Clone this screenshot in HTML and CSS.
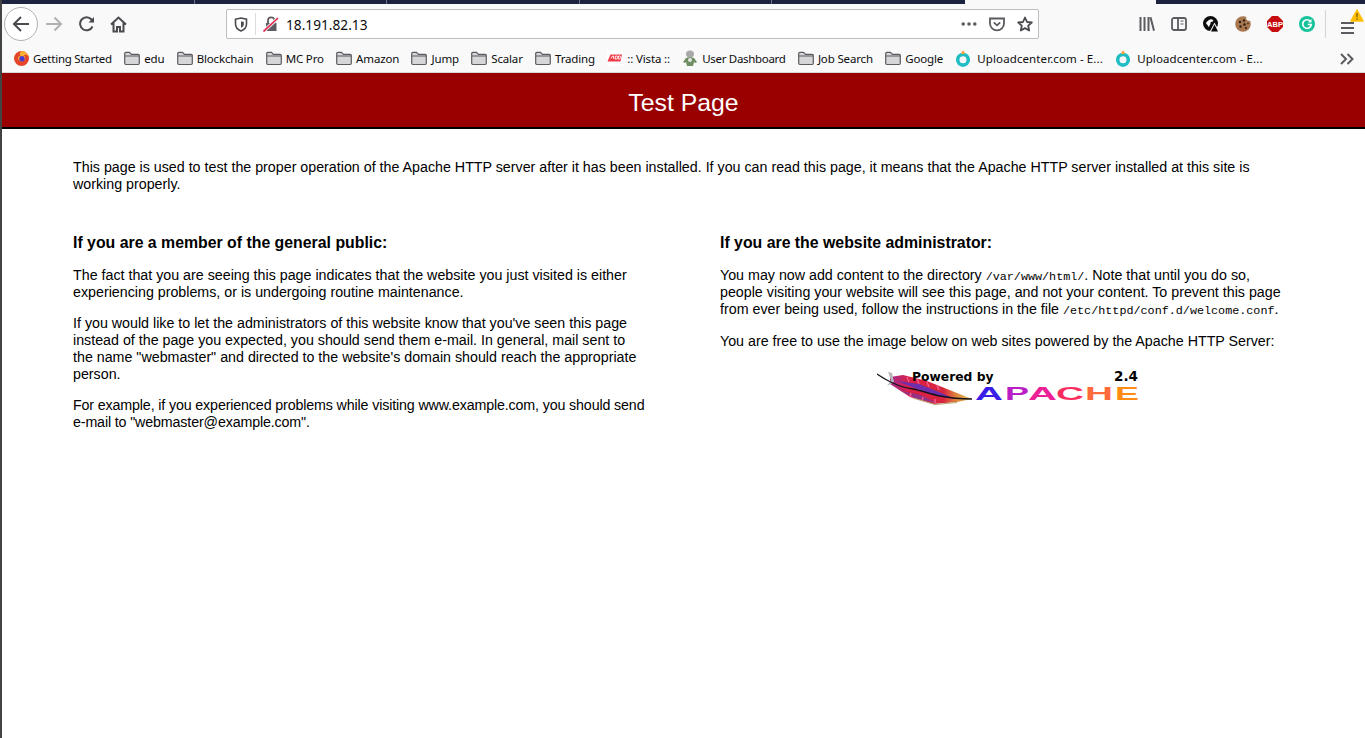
FILE: index.html
```html
<!DOCTYPE html>
<html lang="en">
<head>
    <meta charset="UTF-8">
    <meta name="viewport" content="width=device-width, initial-scale=1.0">
    <title>Test Page for the Apache HTTP Server</title>
    <link rel="stylesheet" href="styles.css">
</head>
<body>
    <!-- Folder icon used by the bookmarks -->
    <svg class="icon-defs" width="0" height="0">
        <symbol id="folder-icon" viewBox="0 0 16 16">
            <path d="M.7 3.500a1.200 1.200 0 0 1 1.200-1.200h3.600l2 2h6.600a1.200 1.200 0 0 1 1.200 1.200v7.800a1.200 1.200 0 0 1-1.200 1.200H1.900a1.200 1.200 0 0 1-1.200-1.200z" fill="#d6d6d8" stroke="#5b5b60" stroke-width="1.200"/>
            <path d="M1 6h14" stroke="#5b5b60" stroke-width="1"/>
        </symbol>
        <symbol id="upload-icon" viewBox="0 0 16 17">
            <circle cx="8" cy="9.800" r="5.300" fill="none" stroke="#22bcc4" stroke-width="3.600"/>
            <path d="M8 .5c1.500 1 1.800 2 1.500 3.500h-3C6.200 2.500 7 1.500 8 .5z" fill="#f6a13a"/>
        </symbol>
    </svg>

    <!-- Window edge behind the browser -->
    <span class="edge-mark edge-mark-tall"></span>
    <span class="edge-mark edge-mark-one"></span>
    <span class="edge-mark edge-mark-two"></span>

    <div class="browser-chrome">
        <!-- Tab strip, only its lower edge shows -->
        <div class="tab-strip">
            <div class="tab"></div>
            <div class="tab"></div>
            <div class="tab"></div>
            <div class="tab"></div>
            <div class="tab tab-last"></div>
            <div class="tab-gap"></div>
            <div class="tab-rest"></div>
        </div>

        <div class="toolbar">
            <div class="nav-buttons">
                <button class="back-btn" aria-label="Back">
                    <svg width="20" height="20" viewBox="0 0 20 20" fill="none" stroke="#4a4a4f" stroke-width="2">
                        <path d="M18 10H3M10 3l-7 7 7 7"/>
                    </svg>
                </button>
                <svg class="forward" width="18" height="18" viewBox="0 0 18 18" fill="none" stroke="#b1b1b3" stroke-width="2">
                    <path d="M1 9h15M9.500 2.500 16 9l-6.500 6.500"/>
                </svg>
                <svg class="reload" width="16" height="16" viewBox="0 0 16 16" fill="none" stroke="#4a4a4f" stroke-width="2">
                    <path d="M13.500 10.500A6.500 6.500 0 1 1 12.500 3.500L14.500 6"/>
                    <path d="M15 1v5.500H9.500" fill="#4a4a4f" stroke="none"/>
                </svg>
                <svg class="home" width="17" height="17" viewBox="0 0 17 17" fill="none" stroke="#4a4a4f" stroke-width="2">
                    <path d="M1 8.500 8.500 1.500 16 8.500M3.500 7v8.500h3.500v-4.500h3v4.500h3.500V7"/>
                </svg>
            </div>

            <div class="url-bar">
                <svg class="shield" width="14" height="15" viewBox="0 0 14 15" fill="none" stroke="#4a4a4f" stroke-width="1.600">
                    <path d="M1.500 2.200 7 1l5.500 1.200V7c0 3.500-2.500 5.800-5.500 7-3-1.200-5.500-3.500-5.500-7z"/>
                    <path d="M7 4.200 9.800 5V7.200c0 1.700-1.200 2.900-2.800 3.500z" fill="#4a4a4f" stroke="none"/>
                </svg>
                <span class="url-divider"></span>
                <svg class="lock" width="16" height="16" viewBox="0 0 16 16">
                    <path d="M3 7h10.500v8H3z" fill="#5b5b60"/>
                    <path d="M5 7V4.500a3.200 3.200 0 0 1 6.400 0V7" fill="none" stroke="#5b5b60" stroke-width="1.800"/>
                    <path d="M1 15 15 2" stroke="#f0f0f0" stroke-width="3.400"/>
                    <path d="M.5 15.500 15 2" stroke="#e22850" stroke-width="1.600"/>
                </svg>
                <span class="url-text">18.191.82.13</span>
                <div class="url-actions">
                    <svg width="16" height="16" viewBox="0 0 16 16" fill="#5b5b60">
                        <circle cx="2.200" cy="8" r="1.800"/><circle cx="8" cy="8" r="1.800"/><circle cx="13.800" cy="8" r="1.800"/>
                    </svg>
                    <svg width="16" height="16" viewBox="0 0 16 16" fill="none" stroke="#5b5b60" stroke-width="1.800">
                        <path d="M1 2.500h14V7.500a7 6.800 0 0 1-14 0z"/>
                        <path d="M4.800 6.300 8 9.300l3.200-3"/>
                    </svg>
                    <svg width="16" height="16" viewBox="0 0 16 16" fill="none" stroke="#4a4a4f" stroke-width="1.800" stroke-linejoin="round">
                        <path d="M8 1.500 10 6l4.800.5-3.600 3.200 1 4.800L8 12.100 3.800 14.500l1-4.800L1.200 6.500 6 6z"/>
                    </svg>
                </div>
            </div>

            <div class="toolbar-right">
                <svg width="16" height="16" viewBox="0 0 16 16" fill="none" stroke="#5b5b60" stroke-width="2">
                    <path d="M1.500 1v14M5.500 1v14M9.500 1v14M11.500 1.200l3.500 13.600"/>
                </svg>
                <svg width="16" height="16" viewBox="0 0 16 16" fill="none" stroke="#5b5b60" stroke-width="1.800">
                    <rect x="1" y="2" width="14" height="12" rx="2"/>
                    <path d="M7 2v12"/>
                    <path d="M9.500 5H12.500M9.500 8H12.500" stroke-width="1.200"/>
                </svg>
                <svg width="16" height="16" viewBox="0 0 16 16">
                    <circle cx="7.500" cy="7.500" r="7.500" fill="#0c0c0d"/>
                    <path d="M3 7c1-2 2-2 3-3s3-1 4 0-1 2-2 2 0 2-1 3-1 3-2 1-2-2-2-3z" fill="#f9f9fa"/>
                    <path d="M11.500 6.500 16.500 16H6.500z" fill="#f9f9fa"/>
                    <path d="M11.500 8.500 15 15.500H8z" fill="#0c0c0d"/>
                </svg>
                <svg width="16" height="16" viewBox="0 0 16 16">
                    <circle cx="8" cy="8" r="7.800" fill="#a9784f"/>
                    <circle cx="14" cy="2" r="2.800" fill="#f9f9fa"/>
                    <g fill="#2f1f14">
                        <circle cx="5" cy="6" r="1.200"/><circle cx="9" cy="4.500" r="1.200"/><circle cx="9.500" cy="8.500" r="1.300"/>
                        <circle cx="5.500" cy="10.500" r="1.200"/><circle cx="11" cy="12" r="1.100"/><circle cx="13" cy="7.500" r=".8"/>
                    </g>
                </svg>
                <svg width="16" height="16" viewBox="0 0 16 16">
                    <path d="M5 0h6l5 5v6l-5 5H5l-5-5V5z" fill="#c70d0d"/>
                    <text class="abp-text" x="8" y="11" text-anchor="middle">ABP</text>
                </svg>
                <svg width="16" height="16" viewBox="0 0 16 16">
                    <circle cx="8" cy="8" r="8" fill="#15c39a"/>
                    <path d="M11.500 5.500A4.300 4.300 0 1 0 12.300 8.500H8.800" fill="none" stroke="#fff" stroke-width="1.700"/>
                    <path d="M12.500 3v3.500H9z" fill="#fff"/>
                </svg>
                <span class="toolbar-divider"></span>
                <div class="menu-btn">
                    <svg width="13" height="13" viewBox="0 0 13 13" fill="#5b5b60">
                        <rect y="0" width="13" height="2"/><rect y="5" width="13" height="2"/><rect y="10" width="13" height="2"/>
                    </svg>
                    <svg class="menu-warning" width="14" height="13" viewBox="0 0 14 13">
                        <path d="M7 1 13 12H1z" fill="#ffbf00" stroke="#ffbf00" stroke-width="1.500" stroke-linejoin="round"/>
                        <path d="M7 4v4.200M7 9.300v1.400" stroke="#7a5c00" stroke-width="1.300"/>
                    </svg>
                </div>
            </div>
        </div>

        <div class="bookmarks">
            <a class="bookmark bookmark-first">
                <svg width="15" height="15" viewBox="0 0 15 15">
                    <circle cx="7.500" cy="7.500" r="7.500" fill="#e5462b"/>
                    <path d="M7.500 0A7.500 7.500 0 0 1 15 7.500C15 4 11 3 9.500 4.500 12 5 12 9 9 10c-3 1-5-1-5-3 0-1 1-2 2.500-2C5 3 6 1 7.500 0z" fill="#ffb02e"/>
                    <circle cx="8" cy="7.800" r="2.700" fill="#4a3ad0"/>
                </svg>
                Getting Started
            </a>
            <a class="bookmark"><svg class="folder-svg"><use href="#folder-icon"/></svg>edu</a>
            <a class="bookmark"><svg class="folder-svg"><use href="#folder-icon"/></svg>Blockchain</a>
            <a class="bookmark"><svg class="folder-svg"><use href="#folder-icon"/></svg>MC Pro</a>
            <a class="bookmark"><svg class="folder-svg"><use href="#folder-icon"/></svg>Amazon</a>
            <a class="bookmark"><svg class="folder-svg"><use href="#folder-icon"/></svg>Jump</a>
            <a class="bookmark"><svg class="folder-svg"><use href="#folder-icon"/></svg>Scalar</a>
            <a class="bookmark"><svg class="folder-svg"><use href="#folder-icon"/></svg>Trading</a>
            <a class="bookmark">
                <svg width="16" height="16" viewBox="0 0 16 16">
                    <rect width="16" height="16" fill="#fff"/>
                    <path d="M3.500 4.500h11.500l-1.500 7H.5z" fill="#ef3b46"/>
                    <path d="M4 8.500 5.500 6h1l.3 3M8 9l.5-3h1.500c1 0 1 3-.8 3zM11 9l.5-3h1.500c1 0 1 3-.8 3z" fill="none" stroke="#fff" stroke-width=".9"/>
                </svg>
                :: Vista ::
            </a>
            <a class="bookmark bookmark-tight">
                <svg width="16" height="17" viewBox="0 0 16 17">
                    <ellipse cx="8" cy="4" rx="4" ry="3.500" fill="#a9a9a9"/>
                    <path d="M4 8c2-1 6-1 8 0l3 4-2 1-1-1-1 4H5l-1-4-1 1-2-1z" fill="#6f8f63"/>
                    <circle cx="8" cy="10" r="2" fill="#e4e4e4"/>
                </svg>
                User Dashboard
            </a>
            <a class="bookmark"><svg class="folder-svg"><use href="#folder-icon"/></svg>Job Search</a>
            <a class="bookmark"><svg class="folder-svg"><use href="#folder-icon"/></svg>Google</a>
            <a class="bookmark upload"><svg class="upload-svg"><use href="#upload-icon"/></svg>Uploadcenter.com - E...</a>
            <a class="bookmark upload"><svg class="upload-svg"><use href="#upload-icon"/></svg>Uploadcenter.com - E...</a>
            <svg class="bookmarks-more" width="14" height="12" viewBox="0 0 14 12" fill="none" stroke="#5b5b60" stroke-width="2">
                <path d="M1 1l5 5-5 5M7.500 1l5 5-5 5"/>
            </svg>
        </div>
    </div>

    <div class="page-header">
        <h1>Test Page</h1>
    </div>

    <div class="content">
        <p class="intro">This page is used to test the proper operation of the Apache HTTP server after it has been installed. If you can read this page, it means that the Apache HTTP server installed at this site is working properly.</p>

        <div class="columns">
            <div class="column">
                <h2>If you are a member of the general public:</h2>
                <p>The fact that you are seeing this page indicates that the website you just visited is either experiencing problems, or is undergoing routine maintenance.</p>
                <p>If you would like to let the administrators of this website know that you've seen this page instead of the page you expected, you should send them e-mail. In general, mail sent to the name "webmaster" and directed to the website's domain should reach the appropriate person.</p>
                <p class="tight">For example, if you experienced problems while visiting www.example.com, you should send e-mail to "webmaster@example.com".</p>
            </div>
            <div class="column">
                <h2>If you are the website administrator:</h2>
                <p class="admin-note">You may now add content to the directory <code>/var/www/html/</code>. Note that until you do so, people visiting your website will see this page, and not your content. To prevent this page from ever being used, follow the instructions in the file <code>/etc/httpd/conf.d/welcome.conf</code>.</p>
                <p>You are free to use the image below on web sites powered by the Apache HTTP Server:</p>
                <div class="logo-wrap">
                    <svg width="264" height="36" viewBox="0 0 264 36">
                        <defs>
                            <linearGradient id="feather" x1="0" y1="0" x2="1" y2="0">
                                <stop offset="0" stop-color="#a52a8c"/>
                                <stop offset=".25" stop-color="#dc1f45"/>
                                <stop offset=".65" stop-color="#d8253f"/>
                                <stop offset=".8" stop-color="#e0803a"/>
                                <stop offset="1" stop-color="#dcc860"/>
                            </linearGradient>
                        </defs>
                        <!-- Feather -->
                        <path d="M13 8 26 6 50 12 70 20 95 30 80 33 56 35 33 28 13 15z" fill="url(#feather)"/>
                        <path d="M20 12 40 20 60 27 78 30 62 23 42 15z" fill="#6d2fae"/>
                        <path d="M24 22 40 30 60 34 44 26z" fill="#7a3a9e" opacity=".75"/>
                        <path d="M30 8 32 13M40 10 42 15M50 13 52 18M60 16 62 21M34 24 33 28M46 28 45 32M58 30 58 34" stroke="#f05a8c" stroke-width="1.500"/>
                        <path d="M36 29 58 35.500 80 33.500" fill="none" stroke="#b9a77c" stroke-width="1.200"/>
                        <path d="M11 3 14 11 10 17 17 13 15 4z" fill="#b4b8bc"/>
                        <path d="M0 5C6 9 11 12 16 14c6 3 13 5 20 6 9 2 18 5 27 7 10 2 22 3 32 3" fill="none" stroke="#16121a" stroke-width="1.300"/>
                        <!-- Wordmark -->
                        <text class="logo-powered" x="35" y="12">Powered by</text>
                        <text class="logo-version" x="237" y="12">2.4</text>
                        <text class="logo-apache" x="98" y="31" textLength="28" lengthAdjust="spacingAndGlyphs" fill="#3a1ee8">A</text>
                        <text class="logo-apache" x="128" y="31" textLength="24" lengthAdjust="spacingAndGlyphs" fill="#b81fc4">P</text>
                        <text class="logo-apache" x="151" y="31" textLength="29" lengthAdjust="spacingAndGlyphs" fill="#ec1f96">A</text>
                        <text class="logo-apache" x="179" y="31" textLength="28" lengthAdjust="spacingAndGlyphs" fill="#fb2d5f">C</text>
                        <text class="logo-apache" x="208" y="31" textLength="28" lengthAdjust="spacingAndGlyphs" fill="#ff6a3c">H</text>
                        <text class="logo-apache" x="238" y="31" textLength="24" lengthAdjust="spacingAndGlyphs" fill="#ff8c12">E</text>
                    </svg>
                </div>
            </div>
        </div>
    </div>
</body>
</html>
```

FILE: styles.css
```css
:root {
    --chrome-bg: #f9f9fa;
    --tab-navy: #1c2340;
    --header-red: #990000;
    --edge: #434343;
}

* {
    box-sizing: border-box;
}

html, body {
    margin: 0;
    padding: 0;
}

body {
    position: relative;
    background: #fff;
    color: #000;
    font-family: "Liberation Sans", Arial, sans-serif;
    height: 738px;
    overflow: hidden;
    border-left: 2px solid var(--edge);
}

.icon-defs {
    position: absolute;
}

.edge-mark {
    position: absolute;
    left: -2px;
    width: 2px;
    height: 3px;
    background: #a0a0a0;
}

.edge-mark-tall {
    top: 282px;
    height: 46px;
    background: #777;
}

.edge-mark-one {
    top: 547px;
}

.edge-mark-two {
    top: 558px;
}

/* Browser chrome */
.browser-chrome {
    background: var(--chrome-bg);
    height: 73px;
    font-family: "Noto Sans", sans-serif;
    color: #0c0c0d;
}

.tab-strip {
    display: flex;
    height: 4px;
}

.tab {
    width: 192.500px;
    background: var(--tab-navy);
    border-right: 1px solid #6c7080;
}

.tab-last {
    border-right: none;
}

.tab-gap {
    width: 191px;
}

.tab-rest {
    flex: 1;
    background: var(--tab-navy);
}

.toolbar {
    display: flex;
    align-items: center;
    height: 38px;
    padding-top: 2px;
}

.nav-buttons {
    display: flex;
    align-items: center;
    width: 224px;
    padding-left: 2px;
}

.back-btn {
    width: 34px;
    height: 34px;
    padding: 0;
    border: 1px solid #b1b1b3;
    border-radius: 50%;
    background: #fff;
    display: flex;
    align-items: center;
    justify-content: center;
}

.forward {
    margin-left: 7px;
}

.reload {
    margin-left: 16px;
}

.home {
    margin-left: 15px;
}

.url-bar {
    display: flex;
    align-items: center;
    width: 813px;
    height: 30px;
    background: #fff;
    border: 1px solid #bebebe;
    border-radius: 2px;
    padding-left: 7px;
}

.url-divider {
    width: 1px;
    height: 22px;
    background: #dcdcdc;
    margin: 0 7px;
}

.url-text {
    margin-left: 7px;
    font-size: 13.700px;
    flex: 1;
}

.url-actions {
    display: flex;
    align-items: center;
    gap: 12px;
    padding-right: 5px;
}

.toolbar-right {
    display: flex;
    align-items: center;
    gap: 16px;
    margin-left: 100px;
}

.toolbar-divider {
    width: 1px;
    height: 28px;
    background: #d4d4d4;
    margin: 0 -1px 0 -6px;
}

.menu-btn {
    position: relative;
    width: 13px;
    height: 13px;
}

.menu-warning {
    position: absolute;
    top: -9px;
    left: 9px;
}

.abp-text {
    font-family: "Liberation Sans", sans-serif;
    font-size: 7.500px;
    font-weight: bold;
    fill: #fff;
}

/* Bookmarks row */
.bookmarks {
    display: flex;
    align-items: center;
    height: 31px;
    padding: 2px 0 0 12px;
    gap: 12.250px;
    font-size: 11.500px;
    position: relative;
    border-bottom: 1px solid #d8d8d8;
}

.bookmark {
    display: flex;
    align-items: center;
    gap: 4px;
    white-space: nowrap;
    letter-spacing: -0.15px;
}

.bookmark-first {
    letter-spacing: -0.25px;
}

.bookmark-tight {
    letter-spacing: -0.3px;
}

.upload {
    letter-spacing: 0.1px;
}

.folder-svg {
    width: 16px;
    height: 16px;
}

.upload-svg {
    width: 16px;
    height: 17px;
    margin-right: 2px;
}

.bookmarks-more {
    position: absolute;
    right: 11px;
    top: 11px;
}

/* Page */
.page-header {
    background: var(--header-red);
    border-bottom: 2px solid #000;
    height: 56px;
    padding-top: 6px;
    display: flex;
    align-items: center;
    justify-content: center;
}

.page-header h1 {
    margin: 0;
    color: #fff;
    font-size: 24.800px;
    font-weight: normal;
}

.content {
    padding: 30px 71px 0 71px;
    font-size: 14.250px;
    line-height: 17px;
}

.content p {
    margin: 0 0 14px;
}

.content .admin-note {
    margin-bottom: 15px;
}

.intro {
    padding-bottom: 11px;
}

.tight {
    letter-spacing: -0.14px;
}

.columns {
    display: grid;
    grid-template-columns: 574px 572px;
    column-gap: 73px;
}

h2 {
    font-size: 15.850px;
    line-height: 18px;
    font-weight: bold;
    margin: 16px 0 15px;
}

code {
    font-family: "Liberation Mono", monospace;
    font-size: 11.750px;
    line-height: 1;
}

.logo-wrap {
    display: flex;
    justify-content: center;
    margin-top: 19px;
    padding-left: 6px;
}

.logo-powered {
    font-family: "DejaVu Sans", sans-serif;
    font-size: 12.300px;
    font-weight: bold;
}

.logo-version {
    font-family: "DejaVu Sans", sans-serif;
    font-size: 13.500px;
    font-weight: bold;
}

.logo-apache {
    font-family: "Liberation Sans", sans-serif;
    font-size: 19px;
    font-weight: bold;
}
```
